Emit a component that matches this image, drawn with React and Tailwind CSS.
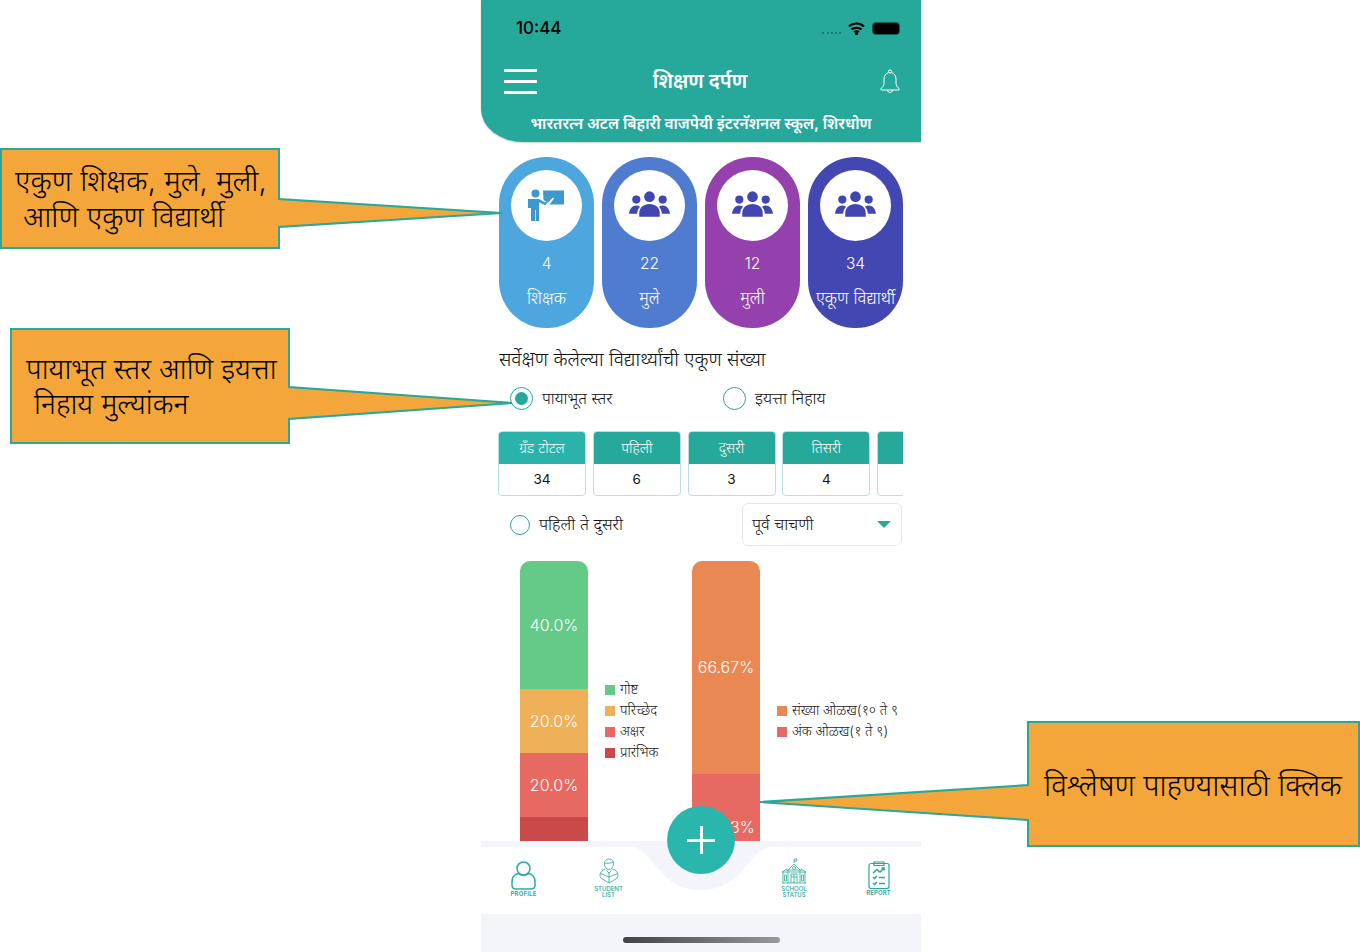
import React from 'react';

const Group = () => (
  <svg className="-mt-[4px]" width="41" height="26" viewBox="0 0 42 26" fill="#4246b3">
    <circle cx="21" cy="5.5" r="5.5" />
    <path d="M10.5 26v-3.5C10.5 16.5 15 13 21 13s10.500 3.500 10.500 9.500V26z" />
    <circle cx="7.500" cy="8.500" r="4.200" />
    <circle cx="34.500" cy="8.500" r="4.200" />
    <path d="M0 23c.5-5 3.500-8.500 7.500-8.500 1.500 0 2.800.400 3.800 1.200C9.500 17.500 8.500 20 8.300 23z" />
    <path d="M42 23c-.5-5-3.500-8.500-7.500-8.500-1.500 0-2.800.400-3.800 1.200 1.800 1.800 2.800 4.300 3 7.300z" />
  </svg>
);

const Teacher = () => (
  <svg className="-ml-[2px]" width="37" height="33" viewBox="0 0 37 33" fill="#3f97d0">
    <circle cx="8.500" cy="4.500" r="4" />
    <path d="M1 10h11l6 3.500 4-4 .8.7-4.500 6-6.300-3V32H8.700V21H8v11H4V19H1z" />
    <path d="M16 1.500h21v14H22.500l4.500-6-1-1-5 5-4.500-2.500z" />
  </svg>
);

const BellIcon = () => (
  <svg width="20" height="25" viewBox="0 0 20 25" fill="none" stroke="white" strokeWidth="1">
    <circle cx="10" cy="2.500" r="1.600" />
    <path d="M8.500 3.500C5.500 4.500 4 7 4 10v4c0 2.500-1 4-3 5.500-.8.700-.4 1.500.5 1.500h17c.9 0 1.300-.8.500-1.500C17 18 16 16.500 16 14v-4c0-3-1.500-5.500-4.500-6.500" />
    <path d="M7.500 21c0 3.300 5 3.300 5 0" />
  </svg>
);

const ProfileIcon = () => (
  <svg width="25" height="29" viewBox="0 0 25 29" fill="none" stroke="#2aada2" strokeWidth="1.500">
    <circle cx="12.500" cy="7.500" r="6.500" />
    <path d="M7 12.500C3 13.500 1 17 1 21v3c0 2.500 1.500 4 4 4h15c2.500 0 4-1.500 4-4v-3c0-4-2-7.500-6-8.500-3 2.500-8 2.500-11 0z" />
  </svg>
);

const StudentIcon = () => (
  <svg width="20" height="26" viewBox="0 0 20 26" fill="none" stroke="#26a89b" strokeWidth="0.800">
    <path d="M5.500 5.500C5.500 2.500 7.500 1 10 1s4.500 1.500 4.500 4.500c0 3.500-2 6-4.500 6s-4.500-2.500-4.500-6z" />
    <path d="M5.500 5c2 .5 6 .5 9-1" />
    <path d="M6.500 11C3 12 1 14 1 17.500c0 2 1.500 3.500 4 4.500l5 3 5-3c2.500-1 4-2.500 4-4.500 0-3.500-2-5.500-5.500-6.500" />
    <path d="M1.500 15.500L10 19l8.500-3.500M10 14v11M7.500 12.500L10 15l2.500-2.500" />
  </svg>
);

const SchoolIcon = () => (
  <svg width="26" height="26" viewBox="0 0 26 26" fill="none" stroke="#26a89b" strokeWidth="0.800">
    <path d="M13 5V1h3v2h-3" />
    <path d="M7 12l6-6 6 6M5 12h16" />
    <path d="M1 14l5-3M25 14l-5-3M1 14h24M2 14v11M24 14v11M7 12v13M19 12v13M1 25h24" />
    <circle cx="13" cy="10" r="1.500" />
    <path d="M10 25v-9h6v9M13 16v9M3.500 17h2v6h-2zM20.500 17h2v6h-2zM10 19h6" />
  </svg>
);

const ReportIcon = () => (
  <svg width="22" height="28" viewBox="0 0 22 28" fill="none" stroke="#26a89b" strokeWidth="1.200">
    <rect x="1" y="2.500" width="20" height="25" rx="2" />
    <path d="M6 1h10v3.500H6z" />
    <path d="M5 12l4-3.500 3 2.500 4-4M13.500 7H16v2.500" strokeWidth="1.500" />
    <path d="M5 16l1.500 1.500L9 15M11 16.500h6M5 22l1.500 1.500L9 21M11 22.500h6" strokeWidth="1.500" />
  </svg>
);

function Callout({ className, points, children }) {
  return (
    <div className={`absolute ${className}`}>
      <svg className="absolute inset-0 h-full w-full">
        <polygon points={points} fill="#f4a63a" stroke="#26a89b" strokeWidth="2" />
      </svg>
      <div className="absolute inset-0 font-light text-black">{children}</div>
    </div>
  );
}

const stats = [
  { n: '4', label: 'शिक्षक', bg: 'bg-[#4da6dd]', teacher: true },
  { n: '22', label: 'मुले', bg: 'bg-[#4f7ccf]' },
  { n: '12', label: 'मुली', bg: 'bg-[#9440ad]' },
  { n: '34', label: 'एकूण विद्यार्थी', bg: 'bg-[#4347b1]' },
];

const tabs = [
  { name: 'ग्रँड टोटल', n: '34', head: 'bg-[#2ab3aa]' },
  { name: 'पहिली', n: '6', head: 'bg-[#26a89b]' },
  { name: 'दुसरी', n: '3', head: 'bg-[#26a89b]' },
  { name: 'तिसरी', n: '4', head: 'bg-[#26a89b]' },
  { name: '', n: '', head: 'bg-[#26a89b]' },
];

const bar1 = [
  { v: '40.0%', h: 'h-[128px]', c: 'bg-[#65c987]' },
  { v: '20.0%', h: 'h-[64px]', c: 'bg-[#eeb059]' },
  { v: '20.0%', h: 'h-[64px]', c: 'bg-[#e76a62]' },
  { v: '', h: 'h-[64px]', c: 'bg-[#c94a48]' },
];
const bar2 = [
  { v: '66.67%', h: 'h-[213px]', c: 'bg-[#e98853]' },
  { v: '33.33%', h: 'h-[107px]', c: 'bg-[#e76a62]' },
];
const legend1 = [
  { t: 'गोष्ट', c: 'bg-[#65c987]' },
  { t: 'परिच्छेद', c: 'bg-[#eeb059]' },
  { t: 'अक्षर', c: 'bg-[#e76a62]' },
  { t: 'प्रारंभिक', c: 'bg-[#c94a48]' },
];
const legend2 = [
  { t: 'संख्या ओळख(१० ते ९', c: 'bg-[#e98853]' },
  { t: 'अंक ओळख(१ ते ९)', c: 'bg-[#e76a62]' },
];

function Bar({ segs }) {
  return (
    <div className="h-[320px] w-[68px] shrink-0 overflow-hidden rounded-t-[10px]">
      {segs.map((s, i) => (
        <div key={i} className={`flex items-center justify-center pb-[1px] text-[16px] font-light text-white ${s.h} ${s.c}`}>{s.v}</div>
      ))}
    </div>
  );
}

function Legend({ items }) {
  return (
    <div className="flex flex-col gap-[7px]">
      {items.map((l) => (
        <div key={l.t} className="flex h-[14px] items-center gap-[5px] whitespace-nowrap text-[13.7px] font-light text-[#222]">
          <span className={`h-[10px] w-[10px] shrink-0 ${l.c}`} />
          {l.t}
        </div>
      ))}
    </div>
  );
}

export default function App() {
  return (
    <div className="relative h-[952px] w-[1360px] overflow-hidden bg-white font-['Inter','Noto_Sans',sans-serif]">
      <div className="ml-[481px] flex h-[952px] w-[440px] flex-col">
        {/* header */}
        <header className="h-[142px] shrink-0 rounded-bl-[42px_33px] bg-[#26a89b] text-white shadow-[0_1px_2px_rgba(0,0,0,0.2)]">
          <div className="flex h-[56px] items-center justify-between pl-[35px] pr-[21px] pt-[1px]">
            <span className="text-[17px] font-medium text-black">10:44</span>
            <div className="flex items-center gap-[7px]">
              <span className="mt-[8px] h-[2px] w-[19px] border-t-2 border-dotted border-[#1a7d73]" />
              <svg width="17" height="13" viewBox="0 0 17 13" fill="none" stroke="black" strokeWidth="2">
                <path d="M1 4.500c4-4 11-4 15 0M3.500 7.500c2.500-2.500 7.500-2.500 10 0M6 10c1.500-1 3.500-1 5 0" />
                <circle cx="8.500" cy="11.500" r=".6" fill="black" />
              </svg>
              <span className="flex h-[13px] w-[28px] rounded-[4px] border border-[#0c5f57] bg-black" />
            </div>
          </div>
          <div className="flex h-[50px] items-center justify-between pl-[23px] pr-[21px]">
            <div className="flex h-[25px] w-[33px] flex-col justify-between">
              <span className="h-[3px] bg-white" />
              <span className="h-[3px] bg-white" />
              <span className="h-[3px] bg-white" />
            </div>
            <span className="-ml-[4px] text-[20px] font-semibold">शिक्षण दर्पण</span>
            <div className="flex w-[33px] justify-end"><BellIcon /></div>
          </div>
          <p className="mt-[6px] whitespace-nowrap text-center text-[15.5px] font-semibold">भारतरत्न अटल बिहारी वाजपेयी इंटरनॅशनल स्कूल, शिरधोण</p>
        </header>

        {/* content */}
        <main className="h-[699px] shrink-0 overflow-hidden pl-[18px]">
          <div className="mt-[15px] flex w-[404px] gap-[8px]">
            {stats.map((s) => (
              <div key={s.n} className={`flex h-[171px] w-[95px] flex-col items-center rounded-[47px] pt-[13px] text-white ${s.bg}`}>
                <div className="flex h-[71px] w-[71px] items-center justify-center rounded-full bg-white">
                  {s.teacher ? <Teacher /> : <Group />}
                </div>
                <span className="mt-[13px] text-[15.5px] font-light leading-[20px]">{s.n}</span>
                <span className="mt-[13px] whitespace-nowrap text-[16.9px] font-light leading-[22px]">{s.label}</span>
              </div>
            ))}
          </div>

          <h2 className="mt-[19px] text-[19.3px] font-light leading-[24px] text-[#111]">सर्वेक्षण केलेल्या विद्यार्थ्यांची एकूण संख्या</h2>

          <div className="mt-[15px] flex h-[25px] items-center pl-[11px]">
            <span className="flex h-[23px] w-[23px] items-center justify-center rounded-full border border-[#26a89b]">
              <span className="h-[13px] w-[13px] rounded-full bg-[#26a89b]" />
            </span>
            <span className="ml-[9px] w-[181px] text-[16.1px] font-light text-[#111]">पायाभूत स्तर</span>
            <span className="h-[23px] w-[23px] rounded-full border border-[#26a89b]" />
            <span className="ml-[9px] text-[16.5px] font-light text-[#111]">इयत्ता निहाय</span>
          </div>

          <div className="-ml-px mt-[20px] flex w-[405px] gap-[6.75px] overflow-hidden">
            {tabs.map((t, i) => (
              <div key={i} className="w-[88px] shrink-0 overflow-hidden rounded-[4px] border border-[#b5e2dd] bg-white">
                <div className={`flex h-[32px] items-center justify-center text-[14.3px] font-light text-white ${t.head}`}>{t.name}</div>
                <div className="flex h-[31px] items-center justify-center text-[13.5px] text-[#111]">{t.n}</div>
              </div>
            ))}
          </div>

          <div className="-ml-px mt-[7px] flex w-[404px] items-center">
            <span className="ml-[12px] h-[20px] w-[20px] rounded-full border border-[#26a89b]" />
            <span className="ml-[9px] w-[203px] text-[16.6px] font-light text-[#111]">पहिली ते दुसरी</span>
            <div className="flex h-[43px] w-[160px] items-center justify-between rounded-[6px] border border-[#e6e6e6] pl-[9px] pr-[10px] text-[16.5px] font-light text-[#111]">
              पूर्व चाचणी
              <span className="h-0 w-0 border-x-[7px] border-t-[7px] border-x-transparent border-t-[#26a89b]" />
            </div>
          </div>

          <div className="mt-[15px] flex items-center pl-[21px]">
            <Bar segs={bar1} />
            <div className="ml-[17px] w-[87px]"><Legend items={legend1} /></div>
            <Bar segs={bar2} />
            <div className="ml-[17px]"><Legend items={legend2} /></div>
          </div>
        </main>

        {/* bottom nav */}
        <nav className="relative h-[73px] shrink-0 bg-[#f4f5fa]">
          <svg className="absolute inset-0" width="440" height="73" viewBox="0 0 440 73">
            <path d="M0 6H150C172 6 176 49 220 49S268 6 290 6H440V73H0z" fill="white" />
          </svg>
          <div className="relative flex h-full items-start pt-[12px] text-[#26a89b]">
            <div className="flex w-[85px] flex-col items-center pt-[8px]">
              <ProfileIcon />
              <span className="text-[6px] font-semibold leading-[7px] tracking-[0.2px]">PROFILE</span>
            </div>
            <div className="flex w-[85px] flex-col items-center pt-[5px]">
              <StudentIcon />
              <span className="mt-[1.500px] text-center text-[6px] font-medium leading-[6.500px]">STUDENT<br />LIST</span>
            </div>
            <div className="w-[101px]" />
            <div className="flex w-[84px] flex-col items-center pt-[5px]">
              <SchoolIcon />
              <span className="mt-[1.500px] text-center text-[6px] font-medium leading-[6.500px]">SCHOOL<br />STATUS</span>
            </div>
            <div className="flex w-[85px] flex-col items-center pt-[8px]">
              <ReportIcon />
              <span className="text-[6px] font-semibold leading-[7px] tracking-[0.1px]">REPORT</span>
            </div>
          </div>
          <div className="absolute left-[186px] top-[-35px] flex h-[68px] w-[68px] items-center justify-center rounded-full bg-[#2ab5ad]">
            <span className="absolute h-[3px] w-[28px] bg-white" />
            <span className="absolute h-[28px] w-[3px] bg-white" />
          </div>
        </nav>

        <div className="flex flex-1 items-end justify-center bg-[#f4f5fa] pb-[9px]">
          <span className="h-[6px] w-[157px] rounded-full bg-gradient-to-r from-[#444] to-[#999]" />
        </div>
      </div>

      {/* annotations */}
      <Callout className="left-0 top-[148px] h-[102px] w-[510px]" points="1,1 279,1 279,51 502,65 279,79 279,100 1,100">
        <p className="absolute left-[15px] top-[15px] whitespace-nowrap text-[29.3px] leading-[36px]">एकुण शिक्षक, मुले, मुली,<br />&nbsp;आणि एकुण विद्यार्थी</p>
      </Callout>
      <Callout className="left-[10px] top-[328px] h-[116px] w-[510px]" points="1,1 279,1 279,59 502,75 279,91 279,115 1,115">
        <p className="absolute left-[16px] top-[23px] whitespace-nowrap text-[28.6px] leading-[35px]">पायाभूत स्तर आणि इयत्ता<br />&nbsp;निहाय मुल्यांकन</p>
      </Callout>
      <Callout className="left-[755px] top-[721px] h-[126px] w-[605px]" points="604,1 273,1 273,64 5,81 273,99 273,125 604,125">
        <p className="absolute left-[289px] top-[47px] whitespace-nowrap text-[29.8px] leading-[35px]">विश्लेषण पाहण्यासाठी क्लिक</p>
      </Callout>
    </div>
  );
}
